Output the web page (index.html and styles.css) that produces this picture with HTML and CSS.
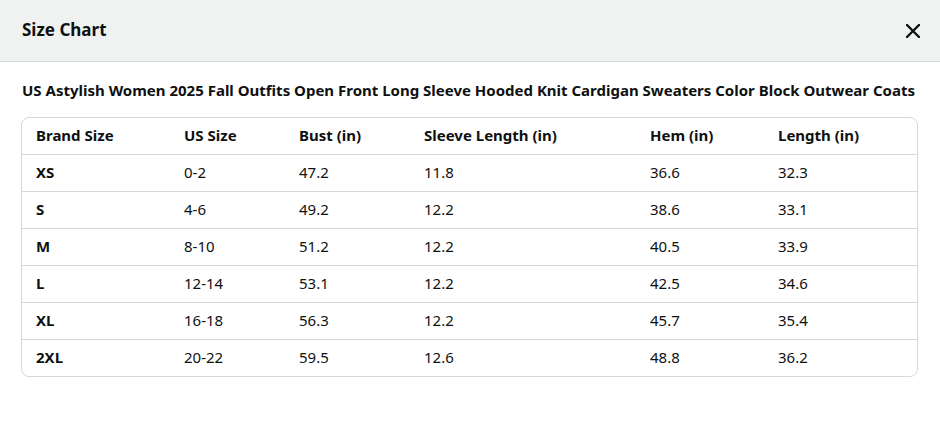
FILE: index.html
```html
<!DOCTYPE html>
<html>
<head>
<meta charset="utf-8">
<link rel="stylesheet" href="styles.css">
</head>
<body>
<div class="modal">
  <header class="modal-header">
    <h2 class="modal-title">Size Chart</h2>
    <button class="close" aria-label="Close">
      <svg width="14" height="14" viewBox="0 0 14 14"><path d="M1 1 L13 13 M13 1 L1 13" stroke="#0F1111" stroke-width="2.4" stroke-linecap="round" fill="none"/></svg>
    </button>
  </header>
  <div class="modal-body">
    <h3 class="product">US Astylish Women 2025 Fall Outfits Open Front Long Sleeve Hooded Knit Cardigan Sweaters Color Block Outwear Coats</h3>
    <div class="table-wrap">
      <table class="chart">
        <thead>
          <tr>
            <th class="c1">Brand Size</th>
            <th class="c2">US Size</th>
            <th class="c3">Bust (in)</th>
            <th class="c4">Sleeve Length (in)</th>
            <th class="c5">Hem (in)</th>
            <th class="c6">Length (in)</th>
          </tr>
        </thead>
        <tbody>
          <tr><th>XS</th><td>0-2</td><td>47.2</td><td>11.8</td><td>36.6</td><td>32.3</td></tr>
          <tr><th>S</th><td>4-6</td><td>49.2</td><td>12.2</td><td>38.6</td><td>33.1</td></tr>
          <tr><th>M</th><td>8-10</td><td>51.2</td><td>12.2</td><td>40.5</td><td>33.9</td></tr>
          <tr><th>L</th><td>12-14</td><td>53.1</td><td>12.2</td><td>42.5</td><td>34.6</td></tr>
          <tr><th>XL</th><td>16-18</td><td>56.3</td><td>12.2</td><td>45.7</td><td>35.4</td></tr>
          <tr><th>2XL</th><td>20-22</td><td>59.5</td><td>12.6</td><td>48.8</td><td>36.2</td></tr>
        </tbody>
      </table>
    </div>
  </div>
</div>
</body>
</html>
```
FILE: styles.css
```css
html, body {
  margin: 0;
  padding: 0;
  background: #ffffff;
}
body {
  font-family: "Noto Sans", "Open Sans", Arial, sans-serif;
  color: #0F1111;
}
.modal-header {
  height: 62px;
  box-sizing: border-box;
  background: #F0F2F2;
  border-bottom: 1px solid #D5D9D9;
  display: flex;
  align-items: center;
  justify-content: space-between;
  padding: 0 20px 2px 22px;
}
.modal-title {
  margin: 0;
  font-size: 17px;
  font-weight: 700;
  line-height: 24px;
}
.close {
  background: none;
  border: 0;
  padding: 0;
  width: 14px;
  height: 14px;
  display: flex;
  cursor: pointer;
  margin-top: 2px;
}
.modal-body {
  padding: 16px 22px 0 22px;
}
.product {
  margin: 0 0 15px;
  font-size: 15px;
  font-weight: 700;
  line-height: 24px;
  white-space: nowrap;
}
.table-wrap {
  border: 1px solid #D5D9D9;
  border-radius: 8px;
  overflow: hidden;
  margin-left: -1px;
}
.chart {
  width: 100%;
  border-collapse: collapse;
  table-layout: fixed;
  font-size: 15px;
}
.chart th, .chart td {
  text-align: left;
  padding: 0 14px 2px;
  height: 34px;
  line-height: 20px;
  white-space: nowrap;
}
.chart th {
  font-weight: 700;
}
.chart td {
  font-weight: 400;
}
.chart tbody th, .chart tbody td {
  border-top: 1px solid #D5D9D9;
}
.c1 { width: 120px; }
.c2 { width: 87px; }
.c3 { width: 97px; }
.c4 { width: 198px; }
.c5 { width: 100px; }
.c6 { width: auto; }
```
